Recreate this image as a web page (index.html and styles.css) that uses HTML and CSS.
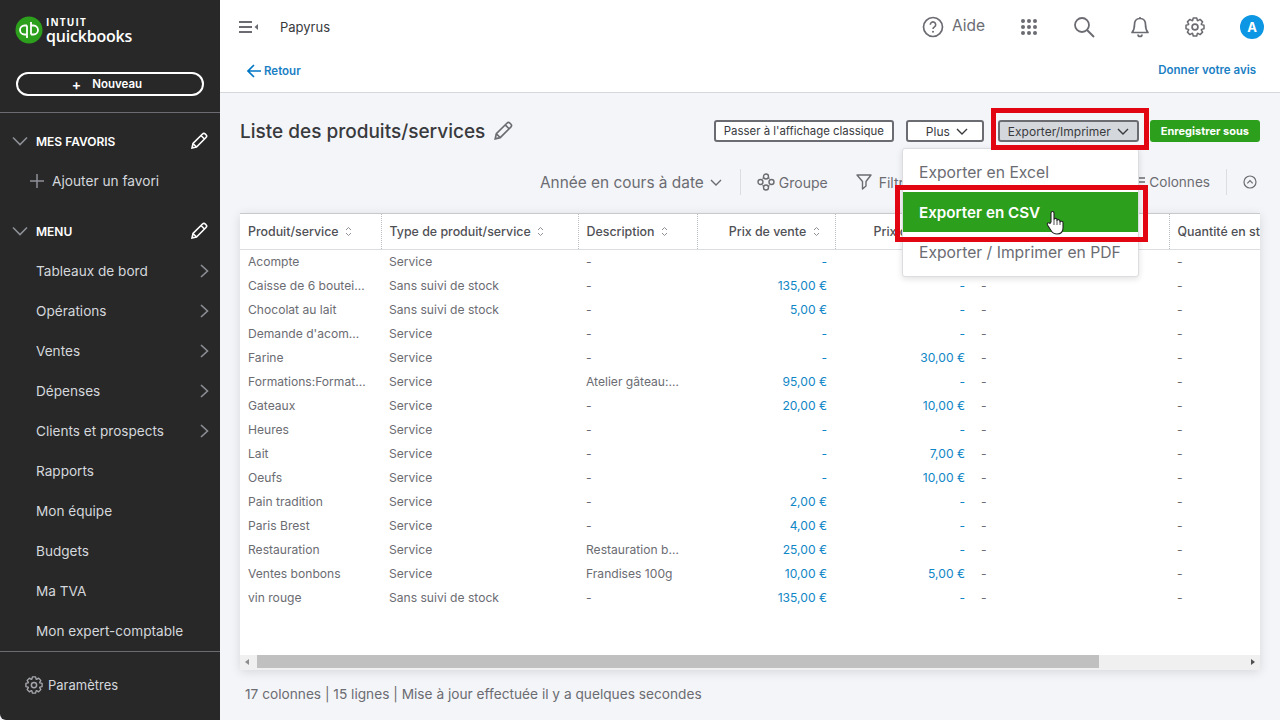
FILE: index.html
```html
<!DOCTYPE html>
<html lang="fr">
<head>
  <meta charset="UTF-8">
  <title>Liste des produits/services</title>
  <link rel="stylesheet" href="styles.css">
</head>
<body>
  <aside class="sidebar">
    <div class="logo">
      <svg class="logo-mark" width="28" height="28" viewBox="0 0 28 28">
        <circle cx="14" cy="14" r="13.500" fill="#2ca01c"/>
        <path d="M12 9.500H9.500a4.500 4.500 0 0 0 0 9H12M12 9.500V22M16 18.500H18.500a4.500 4.500 0 0 0 0-9H16M16 18.500V6" fill="none" stroke="#fff" stroke-width="1.800"/>
      </svg>
      <div class="logo-text">
        <div class="logo-intuit">INTUIT</div>
        <div class="logo-qb">quickbooks</div>
      </div>
    </div>
    <div class="new-wrap">
      <div class="new-btn"><span class="new-plus">+</span>Nouveau</div>
    </div>
    <div class="nav-head">
      <svg class="nav-caret" width="16" height="10" viewBox="0 0 16 10"><path d="M1 1.500L8 8.500L15 1.500" fill="none" stroke="#8d9096" stroke-width="1.600"/></svg>
      <span class="nav-head-label">MES FAVORIS</span>
      <svg class="nav-pencil" width="18" height="18" viewBox="0 0 18 18"><path d="M2 16L3 11.500L12.500 2C13.300 1.200 14.500 1.200 15.300 2L16 2.700C16.800 3.500 16.800 4.700 16 5.500L6.500 15ZM3 11.500L6.500 15M11 3.500L14.500 7" fill="none" stroke="#fff" stroke-width="1.600"/></svg>
    </div>
    <div class="nav-add">
      <svg width="14" height="14" viewBox="0 0 14 14"><path d="M7 0V14M0 7H14" stroke="#8d9096" stroke-width="1.500"/></svg>
      <span>Ajouter un favori</span>
    </div>
    <div class="nav-head nav-head-menu">
      <svg class="nav-caret" width="16" height="10" viewBox="0 0 16 10"><path d="M1 1.500L8 8.500L15 1.500" fill="none" stroke="#8d9096" stroke-width="1.600"/></svg>
      <span class="nav-head-label">MENU</span>
      <svg class="nav-pencil" width="18" height="18" viewBox="0 0 18 18"><path d="M2 16L3 11.500L12.500 2C13.300 1.200 14.500 1.200 15.300 2L16 2.700C16.800 3.500 16.800 4.700 16 5.500L6.500 15ZM3 11.500L6.500 15M11 3.500L14.500 7" fill="none" stroke="#fff" stroke-width="1.600"/></svg>
    </div>
    <nav class="nav-list">
      <div class="nav-item">Tableaux de bord<svg width="9" height="14" viewBox="0 0 9 14"><path d="M1 1L7.500 7L1 13" fill="none" stroke="#8d9096" stroke-width="1.600"/></svg></div>
      <div class="nav-item">Opérations<svg width="9" height="14" viewBox="0 0 9 14"><path d="M1 1L7.500 7L1 13" fill="none" stroke="#8d9096" stroke-width="1.600"/></svg></div>
      <div class="nav-item">Ventes<svg width="9" height="14" viewBox="0 0 9 14"><path d="M1 1L7.500 7L1 13" fill="none" stroke="#8d9096" stroke-width="1.600"/></svg></div>
      <div class="nav-item">Dépenses<svg width="9" height="14" viewBox="0 0 9 14"><path d="M1 1L7.500 7L1 13" fill="none" stroke="#8d9096" stroke-width="1.600"/></svg></div>
      <div class="nav-item">Clients et prospects<svg width="9" height="14" viewBox="0 0 9 14"><path d="M1 1L7.500 7L1 13" fill="none" stroke="#8d9096" stroke-width="1.600"/></svg></div>
      <div class="nav-item">Rapports</div>
      <div class="nav-item">Mon équipe</div>
      <div class="nav-item">Budgets</div>
      <div class="nav-item">Ma TVA</div>
      <div class="nav-item">Mon expert-comptable</div>
    </nav>
    <div class="nav-settings">
      <svg width="18" height="18" viewBox="-12 -12 24 24"><circle r="3.500" fill="none" stroke="#a4a6ab" stroke-width="2"/><polygon points="-2.84,-7.8 -2.1,-10.8 2.1,-10.8 2.84,-7.8 3.51,-7.52 6.15,-9.12 9.12,-6.15 7.52,-3.51 7.8,-2.84 10.8,-2.1 10.8,2.1 7.8,2.84 7.52,3.51 9.12,6.15 6.15,9.12 3.51,7.52 2.84,7.8 2.1,10.8 -2.1,10.8 -2.84,7.8 -3.51,7.52 -6.15,9.12 -9.12,6.15 -7.52,3.51 -7.8,2.84 -10.8,2.1 -10.8,-2.1 -7.8,-2.84 -7.52,-3.51 -9.12,-6.15 -6.15,-9.12 -3.51,-7.52" fill="none" stroke="#a4a6ab" stroke-width="1.800" stroke-linejoin="round"/></svg>
      <span>Paramètres</span>
    </div>
  </aside>

  <main class="main">
    <header class="topbar">
      <svg class="burger" width="20" height="14" viewBox="0 0 20 14"><path d="M0 2H13M0 7H13M0 12H13" stroke="#6b6c72" stroke-width="2"/><path d="M19 4V10L15.500 7Z" fill="#6b6c72"/></svg>
      <span class="company">Papyrus</span>
      <div class="top-icons">
        <div class="help">
          <svg width="22" height="22" viewBox="0 0 22 22"><circle cx="11" cy="11" r="9.500" fill="none" stroke="#6b6c72" stroke-width="1.700"/><path d="M8.300 8.700a2.700 2.700 0 1 1 4.200 2.200c-.9.600-1.500 1-1.500 2.100" fill="none" stroke="#6b6c72" stroke-width="1.600"/><circle cx="11" cy="15.700" r="1" fill="#6b6c72"/></svg>
          <span class="help-label">Aide</span>
        </div>
        <svg width="18" height="18" viewBox="0 0 18 18" fill="#6b6c72"><circle cx="3" cy="3" r="2"/><circle cx="9" cy="3" r="2"/><circle cx="15" cy="3" r="2"/><circle cx="3" cy="9" r="2"/><circle cx="9" cy="9" r="2"/><circle cx="15" cy="9" r="2"/><circle cx="3" cy="15" r="2"/><circle cx="9" cy="15" r="2"/><circle cx="15" cy="15" r="2"/></svg>
        <svg width="22" height="22" viewBox="0 0 22 22"><circle cx="9" cy="9" r="7" fill="none" stroke="#6b6c72" stroke-width="1.800"/><path d="M14 14L21 21" stroke="#6b6c72" stroke-width="2"/></svg>
        <svg width="20" height="22" viewBox="0 0 20 22"><path d="M10 2.500C6 2.500 4.500 5.500 4.500 8.500C4.500 12.500 3.800 14.500 2 16.500H18C16.200 14.500 15.500 12.500 15.500 8.500C15.500 5.500 14 2.500 10 2.500ZM10 1V2.500M8 18.500a2 2 0 0 0 4 0" fill="none" stroke="#6b6c72" stroke-width="1.700" stroke-linejoin="round"/></svg>
        <svg width="20" height="20" viewBox="-12 -12 24 24"><circle r="3.500" fill="none" stroke="#6b6c72" stroke-width="2"/><polygon points="-2.84,-7.8 -2.1,-10.8 2.1,-10.8 2.84,-7.8 3.51,-7.52 6.15,-9.12 9.12,-6.15 7.52,-3.51 7.8,-2.84 10.8,-2.1 10.8,2.1 7.8,2.84 7.52,3.51 9.12,6.15 6.15,9.12 3.51,7.52 2.84,7.8 2.1,10.8 -2.1,10.8 -2.84,7.8 -3.51,7.52 -6.15,9.12 -9.12,6.15 -7.52,3.51 -7.8,2.84 -10.8,2.1 -10.8,-2.1 -7.8,-2.84 -7.52,-3.51 -9.12,-6.15 -6.15,-9.12 -3.51,-7.52" fill="none" stroke="#6b6c72" stroke-width="1.800" stroke-linejoin="round"/></svg>
        <div class="avatar">A</div>
      </div>
    </header>
    <div class="subbar">
      <a class="back">
        <svg width="14" height="14" viewBox="0 0 14 14"><path d="M7 1L1 7L7 13M1 7H14" fill="none" stroke="#0077c5" stroke-width="1.700"/></svg>
        Retour
      </a>
      <a class="feedback">Donner votre avis</a>
    </div>

    <div class="content">
      <div class="title-row">
        <h1 class="title">Liste des produits/services</h1>
        <svg class="title-pencil" width="20" height="20" viewBox="0 0 18 18"><path d="M2 16L3 11.500L12.500 2C13.300 1.200 14.500 1.200 15.300 2L16 2.700C16.800 3.500 16.800 4.700 16 5.500L6.500 15ZM3 11.500L6.500 15M11 3.500L14.500 7" fill="none" stroke="#6b6c72" stroke-width="1.500"/></svg>
        <div class="actions">
          <div class="btn btn-classic">Passer à l'affichage classique</div>
          <div class="btn btn-more">Plus
            <svg width="12" height="7" viewBox="0 0 12 7"><path d="M1 1L6 6L11 1" fill="none" stroke="#393a3d" stroke-width="1.400"/></svg>
          </div>
          <div class="btn btn-active">Exporter/Imprimer
            <svg width="12" height="7" viewBox="0 0 12 7"><path d="M1 1L6 6L11 1" fill="none" stroke="#393a3d" stroke-width="1.400"/></svg>
          </div>
          <div class="btn btn-save">Enregistrer sous</div>
        </div>
      </div>

      <div class="filter-row">
        <div class="filter-period">Année en cours à date
          <svg width="12" height="7" viewBox="0 0 12 7"><path d="M1 1L6 6L11 1" fill="none" stroke="#6b6c72" stroke-width="1.400"/></svg>
        </div>
        <div class="filter-sep"></div>
        <div class="filter-item filter-group">
          <svg width="18" height="18" viewBox="0 0 18 18" fill="none" stroke="#6b6c72" stroke-width="1.400"><circle cx="9" cy="3.500" r="2.500"/><circle cx="3.500" cy="9" r="2.500"/><circle cx="14.500" cy="9" r="2.500"/><circle cx="9" cy="14.500" r="2.500"/><path d="M5.500 5.500L7 4.500M11 4.500L12.500 5.500M5.500 12.500L7 13.500M11 13.500L12.500 12.500"/></svg>
          Groupe
        </div>
        <div class="filter-item filter-filter">
          <svg width="16" height="16" viewBox="0 0 16 16"><path d="M1 1H15L10 7.500V12L6.500 15V7.500Z" fill="none" stroke="#6b6c72" stroke-width="1.400" stroke-linejoin="round"/></svg>
          Filtre
        </div>
        <div class="filter-item filter-cols">
          <svg width="12" height="12" viewBox="0 0 12 12"><path d="M0 2H12M0 6H12M0 10H12" stroke="#6b6c72" stroke-width="1.400"/></svg>
          Colonnes
        </div>
        <div class="filter-sep filter-sep-right"></div>
        <svg class="filter-collapse" width="14" height="14" viewBox="0 0 14 14"><circle cx="7" cy="7" r="6" fill="none" stroke="#6b6c72" stroke-width="1.200"/><path d="M4.300 8.300L7 5.500L9.700 8.300" fill="none" stroke="#6b6c72" stroke-width="1.200"/></svg>
      </div>

      <div class="card">
        <div class="table-wrap">
          <table class="report">
            <colgroup>
              <col class="c1"><col class="c2"><col class="c3"><col class="c4"><col class="c5"><col class="c6"><col class="c7">
            </colgroup>
            <thead>
              <tr>
                <th>Produit/service <svg class="sort" width="7" height="11" viewBox="0 0 7 11"><path d="M1 4L3.500 1.500L6 4M1 7L3.500 9.500L6 7" fill="none" stroke="#8d9096"/></svg></th>
                <th>Type de produit/service <svg class="sort" width="7" height="11" viewBox="0 0 7 11"><path d="M1 4L3.500 1.500L6 4M1 7L3.500 9.500L6 7" fill="none" stroke="#8d9096"/></svg></th>
                <th>Description <svg class="sort" width="7" height="11" viewBox="0 0 7 11"><path d="M1 4L3.500 1.500L6 4M1 7L3.500 9.500L6 7" fill="none" stroke="#8d9096"/></svg></th>
                <th class="num">Prix de vente <svg class="sort" width="7" height="11" viewBox="0 0 7 11"><path d="M1 4L3.500 1.500L6 4M1 7L3.500 9.500L6 7" fill="none" stroke="#8d9096"/></svg></th>
                <th class="num">Prix d'achat <svg class="sort" width="7" height="11" viewBox="0 0 7 11"><path d="M1 4L3.500 1.500L6 4M1 7L3.500 9.500L6 7" fill="none" stroke="#8d9096"/></svg></th>
                <th>Description</th>
                <th>Quantité en stock</th>
              </tr>
            </thead>
            <tbody>
              <tr><td>Acompte</td><td>Service</td><td>-</td><td class="num">-</td><td class="num">-</td><td>-</td><td>-</td></tr>
              <tr><td>Caisse de 6 boutei…</td><td>Sans suivi de stock</td><td>-</td><td class="num">135,00 €</td><td class="num">-</td><td>-</td><td>-</td></tr>
              <tr><td>Chocolat au lait</td><td>Sans suivi de stock</td><td>-</td><td class="num">5,00 €</td><td class="num">-</td><td>-</td><td>-</td></tr>
              <tr><td>Demande d'acom…</td><td>Service</td><td>-</td><td class="num">-</td><td class="num">-</td><td>-</td><td>-</td></tr>
              <tr><td>Farine</td><td>Service</td><td>-</td><td class="num">-</td><td class="num">30,00 €</td><td>-</td><td>-</td></tr>
              <tr><td>Formations:Format…</td><td>Service</td><td>Atelier gâteau:…</td><td class="num">95,00 €</td><td class="num">-</td><td>-</td><td>-</td></tr>
              <tr><td>Gateaux</td><td>Service</td><td>-</td><td class="num">20,00 €</td><td class="num">10,00 €</td><td>-</td><td>-</td></tr>
              <tr><td>Heures</td><td>Service</td><td>-</td><td class="num">-</td><td class="num">-</td><td>-</td><td>-</td></tr>
              <tr><td>Lait</td><td>Service</td><td>-</td><td class="num">-</td><td class="num">7,00 €</td><td>-</td><td>-</td></tr>
              <tr><td>Oeufs</td><td>Service</td><td>-</td><td class="num">-</td><td class="num">10,00 €</td><td>-</td><td>-</td></tr>
              <tr><td>Pain tradition</td><td>Service</td><td>-</td><td class="num">2,00 €</td><td class="num">-</td><td>-</td><td>-</td></tr>
              <tr><td>Paris Brest</td><td>Service</td><td>-</td><td class="num">4,00 €</td><td class="num">-</td><td>-</td><td>-</td></tr>
              <tr><td>Restauration</td><td>Service</td><td>Restauration b…</td><td class="num">25,00 €</td><td class="num">-</td><td>-</td><td>-</td></tr>
              <tr><td>Ventes bonbons</td><td>Service</td><td>Frandises 100g</td><td class="num">10,00 €</td><td class="num">5,00 €</td><td>-</td><td>-</td></tr>
              <tr><td>vin rouge</td><td>Sans suivi de stock</td><td>-</td><td class="num">135,00 €</td><td class="num">-</td><td>-</td><td>-</td></tr>
            </tbody>
          </table>
        </div>
        <div class="hscroll">
          <span class="arrow arrow-left"></span>
          <div class="thumb"></div>
          <span class="arrow arrow-right"></span>
        </div>
      </div>
      <div class="status">17 colonnes | 15 lignes | Mise à jour effectuée il y a quelques secondes</div>
    </div>
  </main>

  <!-- dropdown over the table -->
  <div class="menu">
    <div class="menu-item">Exporter en Excel</div>
    <div class="menu-item menu-item-on">Exporter en CSV</div>
    <div class="menu-item">Exporter / Imprimer en PDF</div>
  </div>
  <div class="mark mark-btn"></div>
  <div class="mark mark-item"></div>
  <svg class="cursor" width="18" height="25" viewBox="0 0 18 25"><path d="M5 12V3C5 1 8 1 8 3V9.500C8 8 11 8 11 9.500V10.500C11 9 14 9.500 14 11V12C14 10.800 17 11 17 12.500V18C17 21.500 15 24 11 24C8 24 6.500 23 5 20.500L1.500 15C.5 13 3 12 4 13.500Z" fill="#fff" stroke="#222" stroke-width="1.100" stroke-linejoin="round"/><path d="M8 10V15M11 10.500V15M14 11.500V15" stroke="#222" stroke-width=".8"/></svg>
</body>
</html>
```

FILE: styles.css
```css
* {
  box-sizing: border-box;
  margin: 0;
  padding: 0;
}

html, body {
  height: 720px;
  overflow: hidden;
}

body {
  display: flex;
  font-family: Inter, "Open Sans", Arial, sans-serif;
  background-color: #f4f5f8;
  color: #393a3d;
}

.sidebar {
  width: 220px;
  flex: none;
  height: 720px;
  background-color: #282828;
  color: #d4d7dc;
  display: flex;
  flex-direction: column;
  border-bottom-left-radius: 6px;
}

.logo {
  display: flex;
  align-items: center;
  gap: 3px;
  height: 60px;
  padding: 0 0 0 15px;
}

.logo-text {
  color: #fff;
  line-height: 1;
  font-family: "Open Sans", Arial, sans-serif;
}

.logo-intuit {
  font-size: 10px;
  font-weight: 700;
  letter-spacing: 1.200px;
  margin-bottom: 1px;
}

.logo-qb {
  font-size: 16px;
  font-weight: 600;
  letter-spacing: -.2px;
}

.new-wrap {
  padding: 12px 16px 16px;
  border-bottom: 1px solid #6b6c72;
  height: 53px;
}

.new-btn {
  height: 24px;
  padding: 0 6px 0 0;
  border: 2px solid #fff;
  border-radius: 12px;
  color: #fff;
  font-size: 11.500px;
  font-weight: 600;
  display: flex;
  align-items: center;
  justify-content: center;
}

.new-plus {
  font-size: 14px;
  margin-right: 11px;
}

.nav-head {
  display: flex;
  align-items: center;
  height: 20px;
  margin-top: 18px;
  padding: 0 12px 0 12px;
}

.nav-head-menu {
  margin-top: 20px;
}

.nav-head-label {
  flex: 1;
  margin-left: 8px;
  color: #fff;
  font-size: 12px;
  font-weight: 600;
}

.nav-add {
  display: flex;
  align-items: center;
  gap: 8px;
  height: 40px;
  margin-top: 10px;
  padding-left: 30px;
  font-size: 13.700px;
}

.nav-list {
  margin-top: 10px;
  border-bottom: 1px solid #6b6c72;
  height: 401px;
}

.nav-item {
  display: flex;
  align-items: center;
  justify-content: space-between;
  height: 40px;
  padding: 0 11px 0 36px;
  font-size: 13.600px;
}

.nav-settings {
  display: flex;
  align-items: center;
  gap: 5px;
  padding: 24px 0 0 25px;
  font-size: 13px;
}

.main {
  flex: 1;
  min-width: 0;
  display: flex;
  flex-direction: column;
}

.topbar {
  height: 54px;
  flex: none;
  display: flex;
  align-items: center;
  padding-left: 19px;
  background-color: #fff;
}

.company {
  margin-left: 21px;
  font-size: 13px;
}

.top-icons {
  margin-left: auto;
  margin-right: 16px;
  display: flex;
  align-items: center;
  gap: 35px;
}

.help {
  display: flex;
  align-items: center;
  gap: 8px;
  color: #6b6c72;
  font-size: 15.500px;
}

.help-label {
  margin-top: -3px;
}

.avatar {
  width: 24px;
  height: 24px;
  border-radius: 50%;
  background-color: #0d96e3;
  color: #fff;
  font-size: 13px;
  font-weight: 700;
  text-align: center;
  line-height: 24px;
}

.subbar {
  height: 39px;
  flex: none;
  display: flex;
  justify-content: space-between;
  padding: 9px 24px 0 27px;
  background-color: #fff;
  border-bottom: 1px solid #d4d7dc;
  color: #1a80c4;
  font-size: 11.500px;
  font-weight: 600;
}

.back {
  display: flex;
  align-items: center;
  gap: 3px;
  height: 16px;
}

.content {
  flex: 1;
  padding: 27px 20px 0;
  display: flex;
  flex-direction: column;
}

.title-row {
  display: flex;
  align-items: center;
  height: 22px;
}

.title {
  font-size: 19px;
  font-weight: 500;
}

.title-pencil {
  margin-left: 8px;
}

.actions {
  margin-left: auto;
  display: flex;
  gap: 12px;
}

.btn {
  height: 22px;
  padding: 0 8px;
  border: 2px solid #6b6c72;
  border-radius: 3px;
  display: flex;
  align-items: center;
  gap: 6px;
  font-size: 12px;
  font-weight: 400;
  background-color: #fff;
}

.btn-classic {
  font-size: 11.400px;
}

.btn-more {
  padding: 0 14px 0 18px;
  margin-right: 2px;
}

.btn-active {
  background-color: #d4d7dc;
}

.btn-save {
  background-color: #2ca01c;
  border-color: #2ca01c;
  color: #fff;
  font-size: 11px;
  font-weight: 700;
  margin-left: -1px;
  padding: 0 9px;
}

.filter-row {
  display: flex;
  align-items: center;
  height: 34px;
  margin-top: 23px;
  padding-left: 300px;
  color: #6b6c72;
  font-size: 14px;
}

.filter-period {
  display: flex;
  align-items: center;
  gap: 6px;
  font-size: 15.400px;
}

.filter-sep {
  width: 1px;
  height: 26px;
  background-color: #dcdde0;
  margin: 0 16px 0 18px;
}

.filter-item {
  display: flex;
  align-items: center;
  gap: 4px;
}

.filter-filter {
  margin-left: 28px;
  gap: 7px;
}

.filter-cols {
  margin-left: auto;
  font-size: 13.600px;
}

.filter-sep-right {
  margin: 0 16px;
}

.filter-collapse {
  margin-right: 3px;
}

.card {
  margin-top: 14px;
  height: 457px;
  flex: none;
  background-color: #fff;
  border-top: 1px solid #c8cacd;
  box-shadow: 0 2px 10px rgba(0, 0, 0, .12);
  display: flex;
  flex-direction: column;
}

.table-wrap {
  flex: 1;
  overflow: hidden;
}

.report {
  table-layout: fixed;
  border-collapse: collapse;
  width: 1102px;
}

.c1 { width: 141px; }
.c2 { width: 197px; }
.c3 { width: 119px; }
.c4 { width: 138px; }
.c5 { width: 138px; }
.c6 { width: 196px; }
.c7 { width: 173px; }

.report th {
  height: 35px;
  padding: 0 8px;
  font-size: 12.400px;
  font-weight: 500;
  color: #4f5055;
  text-align: left;
  white-space: nowrap;
  border-bottom: 1px solid #dcdde0;
  border-left: 1px dotted #babec5;
}

.report th:first-child {
  border-left: 0;
}

.report th.num {
  padding-right: 15px;
}

.report td {
  height: 24px;
  padding: 0 8px;
  font-size: 12.100px;
  color: #6b6c72;
  white-space: nowrap;
  overflow: hidden;
}

.report td.num {
  color: #0f86c6;
}

.report .num {
  text-align: right;
}

.sort {
  margin-left: 3px;
  vertical-align: -1px;
}

.hscroll {
  height: 15px;
  flex: none;
  background-color: #f0f0f0;
  display: flex;
  align-items: flex-start;
  padding-left: 17px;
  position: relative;
}

.thumb {
  width: 842px;
  height: 13px;
  background-color: #c0c0c0;
}

.arrow {
  position: absolute;
  top: 4px;
  width: 0;
  height: 0;
  border-top: 3.500px solid transparent;
  border-bottom: 3.500px solid transparent;
}

.arrow-left {
  left: 5px;
  border-right: 4px solid #8d8d8d;
}

.arrow-right {
  right: 5px;
  border-left: 4px solid #505050;
}

.status {
  margin-top: 16px;
  padding-left: 5px;
  font-size: 13.700px;
  color: #6b6c72;
}

.menu {
  position: absolute;
  left: 902px;
  top: 148px;
  width: 237px;
  height: 129px;
  padding-top: 3px;
  background-color: #fff;
  border: 1px solid #dcdde0;
  border-radius: 3px;
  box-shadow: 0 2px 6px rgba(0, 0, 0, .12);
}

.menu-item {
  height: 40px;
  padding-left: 16px;
  display: flex;
  align-items: center;
  font-size: 15.700px;
  color: #6b6c72;
}

.menu-item-on {
  background-color: #2ca01c;
  color: #fff;
  font-size: 15.200px;
  font-weight: 600;
}

.mark {
  position: absolute;
  border: 5px solid #e20613;
}

.mark-btn {
  left: 991px;
  top: 108px;
  width: 158px;
  height: 42px;
}

.mark-item {
  left: 895px;
  top: 185px;
  width: 253px;
  height: 57px;
}

.cursor {
  position: absolute;
  left: 1046px;
  top: 210px;
}
```
